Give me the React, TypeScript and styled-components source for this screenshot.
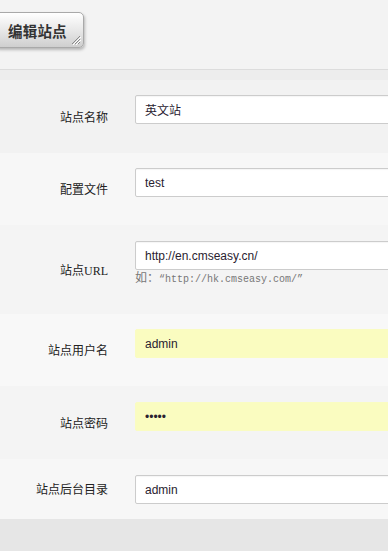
import * as React from "react";
import styled, { createGlobalStyle } from "styled-components";

const GlobalStyle = createGlobalStyle`
  html, body {
    margin: 0;
    padding: 0;
    overflow: hidden;
    background: #e6e6e6;
  }
  body {
    font-family: "Liberation Sans", "Noto Sans CJK SC", sans-serif;
    font-size: 12px;
    color: #222;
  }
`;

const Page = styled.div`
  width: 388px;
  min-height: 551px;
  overflow: hidden;
  background: #e6e6e6;
`;

const Header = styled.div`
  height: 70px;
  background: #f3f3f3;
  border-bottom: 1px solid #dcdcdc;
  box-sizing: border-box;
  padding-top: 12px;
`;

const TitleButton = styled.div`
  position: relative;
  display: inline-flex;
  align-items: center;
  margin-left: -6px;
  height: 36px;
  width: 90px;
  box-sizing: border-box;
  padding-left: 13px;
  border: 1px solid #a9a9a9;
  border-radius: 5px;
  background: linear-gradient(#ffffff, #e6e6e6 55%, #cfcfcf);
  box-shadow: 1px 2px 3px rgba(0, 0, 0, 0.25);
  font-family: "Noto Sans CJK SC", sans-serif;
  font-size: 14.5px;
  font-weight: bold;
  color: #333;
  letter-spacing: 0.2px;
`;

const Grip = styled.svg`
  position: absolute;
  right: 2px;
  bottom: 2px;
`;

const Band = styled.div`
  height: 10px;
  background: #ededed;
`;

const Row = styled.div<{ $bg: string }>`
  display: flex;
  align-items: center;
  background: ${(p) => p.$bg};
`;

const Label = styled.div`
  width: 108px;
  flex: none;
  text-align: right;
  font-family: "Liberation Serif", "Noto Sans CJK SC", serif;
  font-size: 12px;
  color: #222;
`;

const Field = styled.div<{ $top: number; $bottom: number }>`
  margin-left: 27px;
  flex: none;
  display: flex;
  flex-direction: column;
  padding: ${(p) => p.$top}px 0 ${(p) => p.$bottom}px;
`;

const Input = styled.input<{ $filled?: boolean }>`
  width: 300px;
  height: 29px;
  box-sizing: border-box;
  margin: 0;
  padding: 0 9px;
  border: 1px solid ${(p) => (p.$filled ? "#fafcc2" : "#cccccc")};
  border-radius: 2px;
  background: ${(p) => (p.$filled ? "#fafcc0" : "#ffffff")};
  box-shadow: ${(p) => (p.$filled ? "none" : "inset 0 1px 1px rgba(0,0,0,0.04)")};
  font-family: "Liberation Sans", "Noto Sans CJK SC", sans-serif;
  font-size: 12px;
  color: #2a2230;
  outline: none;
`;

const Hint = styled.div`
  margin-top: 2px;
  line-height: 14px;
  font-family: "Liberation Mono", "Noto Sans CJK SC", monospace;
  font-size: 10px;
  color: #777;
`;

const HintCn = styled.span`
  font-size: 12px;
`;

type Item = {
  label: string;
  value: string;
  bg: string;
  top: number;
  bottom: number;
  filled?: boolean;
  password?: boolean;
  hint?: boolean;
};

const items: Item[] = [
  { label: "站点名称", value: "英文站", bg: "#f2f2f2", top: 15, bottom: 29 },
  { label: "配置文件", value: "test", bg: "#f7f7f7", top: 15, bottom: 28 },
  { label: "站点URL", value: "http://en.cmseasy.cn/", bg: "#f4f4f4", top: 16, bottom: 27, hint: true },
  { label: "站点用户名", value: "admin", bg: "#f8f8f8", top: 15, bottom: 28, filled: true },
  { label: "站点密码", value: "admin", bg: "#f4f4f4", top: 16, bottom: 28, filled: true, password: true },
  { label: "站点后台目录", value: "admin", bg: "#f7f7f7", top: 16, bottom: 15 },
];

export default function App() {
  return (
    <Page>
      <GlobalStyle />
      <Header>
        <TitleButton>
          编辑站点
          <Grip width="11" height="11" viewBox="0 0 11 11">
            <path d="M10 2 L2 10 M10 5 L5 10 M10 8 L8 10" stroke="#8a8a8a" strokeWidth="1" />
            <path d="M11 3 L3 11 M11 6 L6 11" stroke="#ffffff" strokeWidth="1" />
          </Grip>
        </TitleButton>
      </Header>
      <Band />
      {items.map((item) => (
        <Row key={item.label} $bg={item.bg}>
          <Label>{item.label}</Label>
          <Field $top={item.top} $bottom={item.bottom}>
            <Input
              type={item.password ? "password" : "text"}
              value={item.value}
              readOnly
              $filled={item.filled}
            />
            {item.hint ? (
              <Hint>
                <HintCn>如：</HintCn>“http://hk.cmseasy.com/”
              </Hint>
            ) : null}
          </Field>
        </Row>
      ))}
    </Page>
  );
}
